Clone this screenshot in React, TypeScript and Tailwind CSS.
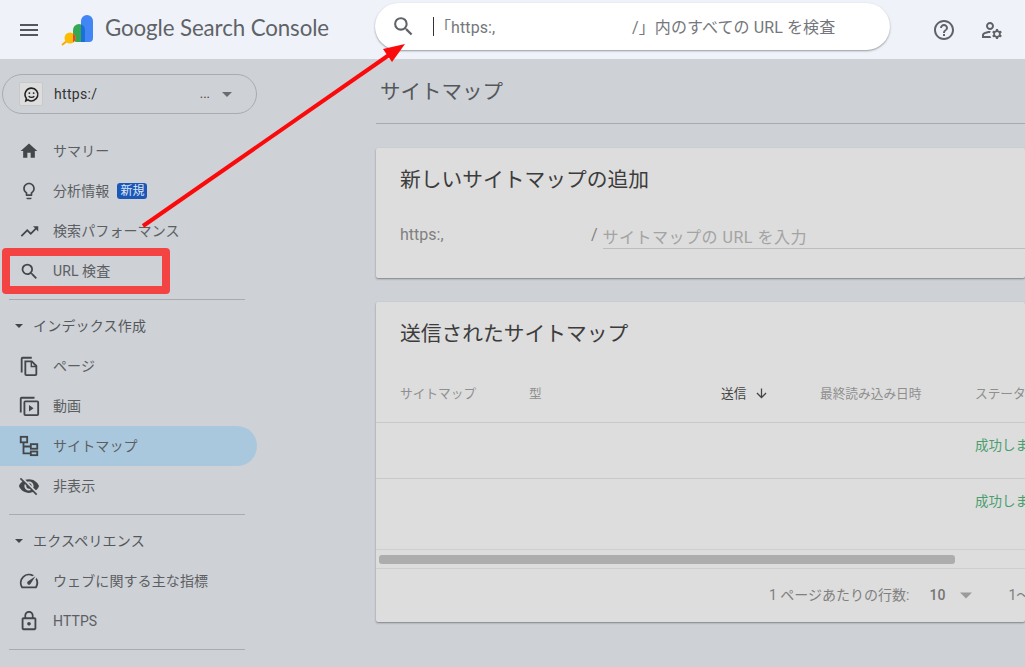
import {
  MdMenu,
  MdSearch,
  MdHelpOutline,
  MdOutlineManageAccounts,
  MdHome,
  MdOutlineLightbulb,
  MdTrendingUp,
  MdLockOutline,
  MdArrowDownward,
  MdOutlineSpeed,
  MdVisibilityOff,
} from "react-icons/md";
import type { ReactNode } from "react";

const FONT = { fontFamily: '"Roboto", "Noto Sans CJK JP", sans-serif' };

function Caret({ className }: { className: string }) {
  return (
    <svg viewBox="0 0 10 5" className={className} fill="currentColor">
      <path d="M0 0h10L5 5z" />
    </svg>
  );
}

function PagesIcon() {
  return (
    <svg viewBox="0 0 24 24" className="w-[22px] h-[22px]" fill="none" stroke="#44474a" strokeWidth="2">
      <path d="M4 19V4a1 1 0 0 1 1-1h10" />
      <path d="M8 7h7l5 5v9a1 1 0 0 1-1 1H9a1 1 0 0 1-1-1z" />
      <path d="M14.500 7v5.500H20" strokeWidth="1.500" />
    </svg>
  );
}

function VideoIcon() {
  return (
    <svg viewBox="0 0 24 24" className="w-[22px] h-[22px]" fill="none" stroke="#44474a" strokeWidth="2">
      <path d="M3 19V4a1 1 0 0 1 1-1h14" />
      <rect x="7" y="7" width="15" height="15" rx="1" />
      <path d="M12 11v7l5-3.500z" fill="#44474a" stroke="none" />
    </svg>
  );
}

function SitemapIcon() {
  return (
    <svg viewBox="0 0 24 24" className="w-[22px] h-[22px]" fill="none" stroke="#44474a" strokeWidth="2">
      <rect x="3" y="2" width="7" height="6" />
      <rect x="14" y="10" width="7" height="5" />
      <rect x="14" y="18" width="7" height="4" />
      <path d="M6 8v12h8M6 12.500h8" />
    </svg>
  );
}

function SmileyIcon() {
  return (
    <svg viewBox="0 0 24 24" className="w-[17px] h-[17px]" fill="none" stroke="#222" strokeWidth="2.200">
      <path d="M12 3a9 9 0 1 1-5 16.500L4 21l.8-3.500A9 9 0 0 1 12 3z" />
      <circle cx="9" cy="10" r="1.300" fill="#222" stroke="none" />
      <circle cx="15" cy="10" r="1.300" fill="#222" stroke="none" />
      <path d="M8 14.500c2 2 6 2 8 0" strokeWidth="1.800" />
    </svg>
  );
}

function Logo() {
  return (
    <svg viewBox="0 0 34 34" className="w-[34px] h-[34px]">
      <path d="M2 32l6-5" stroke="#f9ab00" strokeWidth="2" />
      <path d="M21 8a6 6 0 0 1 12 0v17a4 4 0 0 1-4 4h-8z" fill="#4285f4" />
      <path d="M13 17a6 6 0 0 1 12 0v12h-8a4 4 0 0 1-4-4z" fill="#34a853" />
      <path d="M21 11.500a6 6 0 0 1 4 5.500v12h-4z" fill="#1a6fd8" />
      <circle cx="10" cy="25" r="5.500" fill="#fbbc04" />
      <path d="M13 20.400a5.500 5.500 0 0 1 0 9.200z" fill="#ea4335" />
    </svg>
  );
}

function NavItem({ icon, label, badge, selected }: { icon: ReactNode; label: string; badge?: string; selected?: boolean }) {
  return (
    <div className={`flex items-center h-10 w-[257px] rounded-r-[20px] pl-[18px] ${selected ? "bg-[#a9c8de]" : ""}`}>
      <span className="w-[22px] flex justify-center text-[#44474a]">{icon}</span>
      <span className="ml-[13px] text-[14px] tracking-[0.1px] text-[#5c5f62]">{label}</span>
      {badge && (
        <span className="ml-[8px] rounded-[3px] bg-[#1c57b8] px-[3px] text-[12px] leading-[16px] text-[#dfe7f5]">{badge}</span>
      )}
    </div>
  );
}

function Section({ label }: { label: string }) {
  return (
    <div className="flex items-center h-10 pl-[15px] text-[#55585b]">
      <Caret className="w-2 h-1 text-[#44474a]" />
      <span className="ml-[10px] text-[14px] tracking-[0.2px]">{label}</span>
    </div>
  );
}

export default function App() {
  return (
    <div style={FONT} className="relative w-[1025px] h-[667px] overflow-hidden bg-[#ced1d6]">
      <header className="flex items-center h-[59px] bg-[#eff3f9]">
        <div className="w-[375px] flex items-center pl-[17px]">
          <MdMenu className="w-6 h-6 text-[#53565a]" />
          <div className="ml-[19px]">
            <Logo />
          </div>
          <span className="ml-[11px] -mt-[3px] text-[22.3px] tracking-[-0.1px] text-[#5f6368] whitespace-nowrap" style={{ fontFamily: '"Lato", sans-serif' }}>
            Google Search Console
          </span>
        </div>
        <div className="flex items-center w-[515px] h-[47px] -mt-[7px] rounded-[24px] bg-white shadow-[0_1px_2px_rgba(60,64,67,0.5)]">
          <MdSearch className="ml-[16px] w-[25px] h-[25px] text-[#5f6368]" />
          <span className="ml-[17px] w-px h-[19px] bg-[#333]" />
          <span className="ml-[1px] mt-[3px] flex text-[16px] tracking-[0.1px] text-[#74777b] whitespace-nowrap">
            <span className="w-[197px]">「https:,</span>
            <span>/」内のすべての URL を検査</span>
          </span>
        </div>
        <MdHelpOutline className="ml-[42px] w-6 h-6 text-[#5f6368]" />
        <MdOutlineManageAccounts className="ml-[24px] w-6 h-6 text-[#5f6368]" />
      </header>

      <div className="flex">
        <aside className="w-[376px] shrink-0 pt-[15px]">
          <div className="ml-[2px] flex items-center w-[255px] h-10 rounded-[20px] border border-[#a9acaf] pl-4 pr-6">
            <span className="flex items-center justify-center w-6 h-6 rounded-[2px] bg-[#dddddd] border border-[#c8c8c8]">
              <SmileyIcon />
            </span>
            <span className="ml-[11px] text-[14px] tracking-[0.3px] text-[#333]">https:/</span>
            <span className="ml-auto text-[13px] text-[#444]">...</span>
            <Caret className="ml-[12px] w-[10px] h-[5px] text-[#6a6d70]" />
          </div>
          <div className="mt-[17px]">
            <NavItem icon={<MdHome className="w-[20px] h-[20px]" />} label="サマリー" />
            <NavItem icon={<MdOutlineLightbulb className="w-[20px] h-[20px]" />} label="分析情報" badge="新規" />
            <NavItem icon={<MdTrendingUp className="w-[21px] h-[21px]" />} label="検索パフォーマンス" />
            <NavItem icon={<MdSearch className="w-[21px] h-[21px]" />} label="URL 検査" />
          </div>
          <div className="ml-[9px] w-[236px] h-px bg-[#a9acaf] mt-[8px]" />
          <div className="mt-[6px]">
            <Section label="インデックス作成" />
            <NavItem icon={<PagesIcon />} label="ページ" />
            <NavItem icon={<VideoIcon />} label="動画" />
            <NavItem icon={<SitemapIcon />} label="サイトマップ" selected />
            <NavItem icon={<MdVisibilityOff className="w-[22px] h-[22px]" />} label="非表示" />
          </div>
          <div className="ml-[9px] w-[236px] h-px bg-[#a9acaf] mt-[8px]" />
          <div className="mt-[6px]">
            <Section label="エクスペリエンス" />
            <NavItem icon={<MdOutlineSpeed className="w-[22px] h-[22px]" />} label="ウェブに関する主な指標" />
            <NavItem icon={<MdLockOutline className="w-[22px] h-[22px]" />} label="HTTPS" />
          </div>
          <div className="ml-[9px] w-[236px] h-px bg-[#a9acaf] mt-[8px]" />
        </aside>

        <main className="flex-1 min-w-0">
          <div className="h-[65px] border-b border-[#a9acaf] pt-[18px] pl-[4px] text-[20.5px] leading-7 text-[#55585b]">
            <div className="mt-[1px]">サイトマップ</div>
          </div>
          <section className="mt-[24px] h-[130px] rounded-[2px] bg-[#dddddd] shadow-[0_1px_2px_rgba(60,64,67,0.55)] pl-6 pt-[18px]">
            <h2 className="text-[20.75px] leading-7 text-[#3c3c3c] font-normal">新しいサイトマップの追加</h2>
            <div className="mt-[29px] flex items-end text-[16px] text-[#808080]">
              <span className="w-[191px] pb-[2px]">https:,</span>
              <span className="pb-[2px] mr-[5px]">/</span>
              <span className="flex-1 border-b border-[#bdbdbd] text-[#a3a3a3] tracking-[0.5px] leading-5">サイトマップの URL を入力</span>
            </div>
          </section>
          <section className="mt-[24px] h-[320px] rounded-[2px] bg-[#dddddd] shadow-[0_1px_2px_rgba(60,64,67,0.55)]">
            <h2 className="pl-6 pt-[18px] text-[20.75px] leading-7 text-[#3c3c3c] font-normal">送信されたサイトマップ</h2>
            <div className="mt-[29px] h-[34px] pl-6 flex items-center text-[12.7px] text-[#8f8f8f] whitespace-nowrap">
              <span className="w-[129px] shrink-0">サイトマップ</span>
              <span className="w-[192px] shrink-0">型</span>
              <span className="w-[99px] shrink-0 flex items-center text-[#444]">
                送信
                <MdArrowDownward className="ml-[8px] w-[15px] h-[15px]" />
              </span>
              <span className="w-[155px] shrink-0">最終読み込み日時</span>
              <span className="shrink-0">ステータス</span>
            </div>
            <div className="h-[56px] border-t border-[#c9c9c9] pl-[599px] pt-[12px] mt-[11px] text-[13.5px] text-[#4a9d6e] whitespace-nowrap">成功しました</div>
            <div className="h-[71px] border-t border-[#c9c9c9] pl-[599px] pt-[12px] text-[13.5px] text-[#4a9d6e] whitespace-nowrap">成功しました</div>
            <div className="h-[20px] border-y border-[#cfcfcf] flex items-center px-[3px]">
              <div className="w-[576px] h-[9px] rounded-[3px] bg-[#adadad]" />
            </div>
            <div className="h-[52px] flex items-center pl-[393px] text-[14px] text-[#808080] whitespace-nowrap">
              <span>1 ページあたりの行数:</span>
              <span className="ml-[20px] font-medium text-[#757575]">10</span>
              <Caret className="ml-[15px] w-3 h-[7px] shrink-0 text-[#9a9a9a]" />
              <span className="ml-[36px]">1〜2</span>
            </div>
          </section>
        </main>
      </div>

      {/* annotations over the page */}
      <div className="absolute left-[2px] top-[248px] w-[168px] h-[46px] rounded-[4px] border-[8px] border-[#f44343]" />
      <svg className="absolute inset-0 w-full h-full pointer-events-none" viewBox="0 0 1025 667">
        <path d="M143 226L389 55" stroke="#fa0a0a" strokeWidth="4" />
        <path d="M405 44L383 49L392 62z" fill="#fa0a0a" />
      </svg>
    </div>
  );
}
